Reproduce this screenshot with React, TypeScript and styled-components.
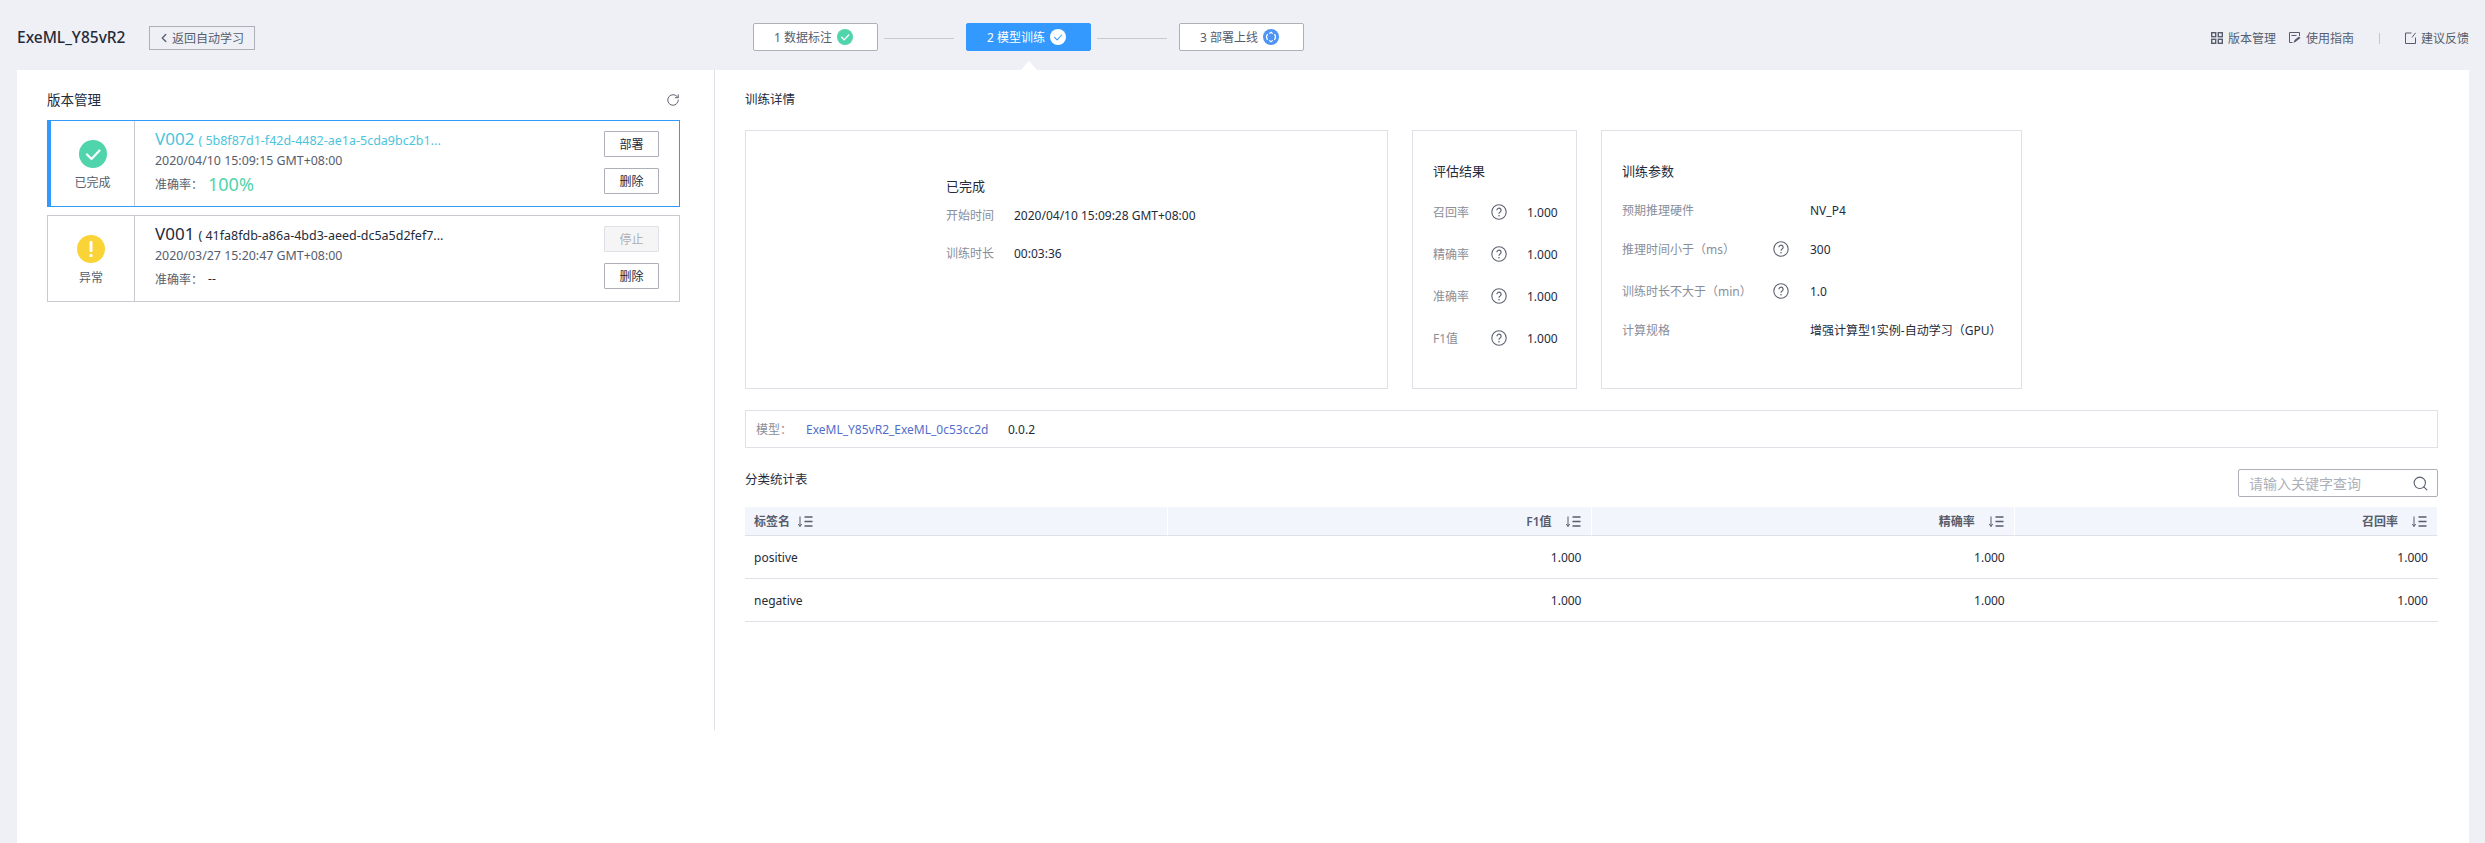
import React from "react";
import styled, { createGlobalStyle } from "styled-components";
import { ChevronLeft, RotateCw, Search } from "lucide-react";

const Global = createGlobalStyle`
  html, body { margin: 0; padding: 0; background: #eef0f5; }
  body { font-family: "Noto Sans", "Noto Sans CJK SC", sans-serif; font-size: 12px; color: #252b3a; }
  * { box-sizing: border-box; }
`;

const Page = styled.div`
  width: 2485px;
  height: 843px;
  display: flex;
  flex-direction: column;
  overflow: hidden;
`;
const Header = styled.header`
  height: 70px;
  flex: none;
  padding: 23px 16px 0 17px;
  display: flex;
  align-items: flex-start;
`;
const HeadLeft = styled.div`
  width: 736px;
  height: 28px;
  display: flex;
  align-items: center;
`;
const Title = styled.h1`
  width: 132px;
  margin: 0;
  font-size: 15.5px;
  font-weight: 500;
  line-height: 28px;
  color: #252b3a;
`;
const BackButton = styled.button`
  width: 106px;
  height: 24px;
  padding: 0 3px 0 0;
  margin-top: 2px;
  border: 1px solid #adb0b8;
  background: transparent;
  display: flex;
  align-items: center;
  justify-content: center;
  gap: 1px;
  font: inherit;
  color: #575d6c;
`;
const Steps = styled.div`
  display: flex;
  align-items: center;
`;
const Step = styled.div<{ $active?: boolean }>`
  position: relative;
  width: 125px;
  height: 28px;
  padding-right: 4px;
  display: flex;
  align-items: center;
  justify-content: center;
  gap: 5px;
  border-radius: 2px;
  border: 1px solid ${(p) => (p.$active ? "#3399ff" : "#adb0b8")};
  background: ${(p) => (p.$active ? "#3399ff" : "#fff")};
  color: ${(p) => (p.$active ? "#fff" : "#575d6c")};
  font-size: 12px;
  ${(p) =>
    p.$active &&
    `&::after {
      content: "";
      position: absolute;
      left: 50%;
      top: 37px;
      margin-left: -9px;
      border-left: 9px solid transparent;
      border-right: 9px solid transparent;
      border-bottom: 10px solid #fff;
    }`}
`;
const Connector = styled.div`
  width: 70px;
  height: 1px;
  margin: 2px 12px 0 6px;
  background: #c8cad0;
`;
const HeadRight = styled.div`
  margin-left: auto;
  height: 28px;
  margin-top: 1px;
  display: flex;
  align-items: center;
  color: #575d6c;
`;
const HeadLink = styled.span<{ $gap?: number }>`
  display: flex;
  align-items: center;
  gap: 5px;
  margin-left: ${(p) => p.$gap ?? 0}px;
`;
const Separator = styled.span`
  width: 1px;
  height: 11px;
  margin-left: 25px;
  margin-right: 25px;
  background: #a8cdf5;
`;
const Main = styled.main`
  flex: 1;
  margin: 0 16px 0 17px;
  background: #fff;
  display: flex;
  align-items: flex-start;
`;
const Side = styled.aside`
  width: 698px;
  height: 660px;
  flex: none;
  padding: 20px 34px 0 30px;
  border-right: 1px solid #dfe1e6;
`;
const SideHead = styled.div`
  height: 20px;
  display: flex;
  align-items: center;
  justify-content: space-between;
  font-size: 13.5px;
  line-height: 20px;
  margin-bottom: 10px;
  color: #252b3a;
  svg { color: #575d6c; }
`;
const VersionCard = styled.div<{ $active?: boolean }>`
  height: 87px;
  display: flex;
  margin-bottom: 8px;
  border: 1px solid ${(p) => (p.$active ? "#3399ff" : "#c8cad0")};
  ${(p) => p.$active && "border-left: 4px solid #3399ff;"}
`;
const StatusCell = styled.div<{ $active?: boolean }>`
  width: ${(p) => (p.$active ? 84 : 87)}px;
  flex: none;
  border-right: 1px solid #c8cad0;
  display: flex;
  flex-direction: column;
  align-items: center;
  padding-top: 19px;
  gap: 7px;
  color: #575d6c;
  line-height: 16px;
`;
const InfoCell = styled.div`
  flex: 1;
  padding: 6px 0 0 20px;
  min-width: 0;
`;
const VersionLine = styled.div<{ $active?: boolean }>`
  height: 24px;
  display: flex;
  align-items: baseline;
  gap: 4px;
  white-space: nowrap;
  font-size: 12.5px;
  color: ${(p) => (p.$active ? "#4cc4dc" : "#252b3a")};
`;
const VersionName = styled.span`
  font-size: 17px;
  line-height: 24px;
`;
const DateLine = styled.div`
  height: 18px;
  margin-top: 1px;
  line-height: 18px;
  font-size: 12.4px;
  color: #575d6c;
`;
const ScoreLine = styled.div`
  height: 26px;
  margin-top: 1px;
  display: flex;
  align-items: center;
  gap: 5px;
  color: #575d6c;
`;
const ScoreValue = styled.span<{ $big?: boolean }>`
  font-size: ${(p) => (p.$big ? 18 : 12)}px;
  color: ${(p) => (p.$big ? "#50d4ab" : "#252b3a")};
  line-height: 26px;
`;
const ActionCell = styled.div`
  width: 75px;
  flex: none;
  padding: 10px 0 0;
  display: flex;
  flex-direction: column;
  gap: 11px;
`;
const ActionButton = styled.button`
  width: 55px;
  height: 26px;
  padding: 0;
  border: 1px solid #adb0b8;
  border-radius: 1px;
  background: #fff;
  color: #252b3a;
  font: inherit;
  &:disabled {
    background: #f5f5f6;
    border-color: #dfe1e6;
    color: #adb0b8;
  }
`;
const Content = styled.section`
  flex: 1;
  padding: 20px 31px 0 30px;
  min-width: 0;
`;
const SectionTitle = styled.div<{ $lift?: number }>`
  height: 20px;
  font-size: 12.5px;
  line-height: 20px;
  color: #252b3a;
  margin-bottom: ${(p) => p.$lift ?? 0}px;
`;
const BoxRow = styled.div`
  display: flex;
  margin-top: 20px;
  height: 259px;
`;
const Box = styled.div<{ $w: number; $ml?: number; $pl: number }>`
  width: ${(p) => p.$w}px;
  margin-left: ${(p) => p.$ml ?? 0}px;
  border: 1px solid #dfe1e6;
  padding: 31px 0 0 ${(p) => p.$pl}px;
`;
const BoxTitle = styled.div`
  height: 18px;
  line-height: 18px;
  font-size: 13px;
  color: #252b3a;
`;
const StateBlock = styled(BoxTitle)`
  margin-top: 15px;
`;
const KvRow = styled.div<{ $top: number; $labelW: number }>`
  display: grid;
  grid-template-columns: ${(p) => p.$labelW}px 1fr;
  align-items: center;
  height: 18px;
  margin-top: ${(p) => p.$top}px;
  white-space: nowrap;
`;
const Label = styled.span`
  color: #8a8e99;
`;
const Value = styled.span`
  color: #252b3a;
`;
const MetricRow = styled.div<{ $top: number }>`
  display: grid;
  grid-template-columns: 58px 36px 1fr;
  align-items: center;
  height: 18px;
  margin-top: ${(p) => p.$top}px;
`;
const ParamRow = styled.div<{ $top: number }>`
  display: grid;
  grid-template-columns: 151px 37px 1fr;
  align-items: center;
  height: 18px;
  margin-top: ${(p) => p.$top}px;
  white-space: nowrap;
`;
const ModelBox = styled.div`
  height: 38px;
  margin-top: 21px;
  border: 1px solid #dfe1e6;
  padding-left: 10px;
  display: flex;
  align-items: center;
`;
const ModelLabel = styled(Label)`
  width: 50px;
`;
const ModelLink = styled.span`
  width: 202px;
  color: #526ecc;
`;
const TableHead = styled.div`
  height: 28px;
  margin-top: 21px;
  display: flex;
  align-items: center;
  justify-content: space-between;
`;
const SearchBox = styled.div`
  width: 200px;
  height: 28px;
  border: 1px solid #adb0b8;
  border-radius: 2px;
  display: flex;
  align-items: center;
  justify-content: space-between;
  padding: 0 8px 0 10px;
  font-size: 14px;
  color: #adb0b8;
  svg { color: #575d6c; }
`;
const Grid = styled.div`
  display: grid;
  grid-template-columns: repeat(4, 1fr);
  margin-top: 10px;
`;
const HeadCell = styled.div<{ $left?: boolean }>`
  height: 29px;
  background: #f2f5fc;
  border-bottom: 1px solid #dfe1e6;
  border-right: 1px solid #fff;
  display: flex;
  align-items: center;
  justify-content: ${(p) => (p.$left ? "flex-start" : "flex-end")};
  gap: ${(p) => (p.$left ? 7 : 13)}px;
  padding: 0 10px 0 9px;
  font-weight: 600;
  color: #575d6c;
`;
const BodyCell = styled.div<{ $left?: boolean }>`
  height: 43px;
  border-bottom: 1px solid #dfe1e6;
  display: flex;
  align-items: center;
  justify-content: ${(p) => (p.$left ? "flex-start" : "flex-end")};
  padding: 0 ${(p) => (p.$left ? 9 : 10)}px 0 9px;
  color: #252b3a;
`;

const CheckBadge = ({ size, bg, fg, sw = 2 }: { size: number; bg: string; fg: string; sw?: number }) => (
  <svg width={size} height={size} viewBox="0 0 28 28">
    <circle cx="14" cy="14" r="14" fill={bg} />
    <path d="M8 14.5l4.5 4.5L20.5 10.5" fill="none" stroke={fg} strokeWidth={sw} strokeLinecap="round" strokeLinejoin="round" />
  </svg>
);
const WarnBadge = () => (
  <svg width="28" height="28" viewBox="0 0 28 28">
    <circle cx="14" cy="14" r="14" fill="#fad337" />
    <rect x="12.5" y="6" width="3" height="11" rx="1" fill="#fff" />
    <rect x="12.5" y="19" width="3" height="3" rx="1" fill="#fff" />
  </svg>
);
const DeployBadge = () => (
  <svg width="16" height="16" viewBox="0 0 16 16">
    <circle cx="8" cy="8" r="8" fill="#4d94f5" />
    <path d="M4.6 5.2A4.6 4.6 0 0 0 4.6 10.8M11.4 5.2A4.6 4.6 0 0 1 11.4 10.8" fill="none" stroke="#fff" strokeWidth="1.3" />
    <path d="M6.2 4.6L8 3.2l1.8 1.4M6.2 11.4L8 12.8l1.8-1.4" fill="none" stroke="#fff" strokeWidth="1.2" />
  </svg>
);
const Help = () => (
  <svg width="16" height="16" viewBox="0 0 16 16">
    <circle cx="8" cy="8" r="7.2" fill="none" stroke="#5e6370" strokeWidth="1.1" />
    <path d="M5.9 6.2a2.1 2.1 0 1 1 3.2 1.8c-.7.4-1.1.9-1.1 1.7" fill="none" stroke="#5e6370" strokeWidth="1.2" />
    <circle cx="8" cy="11.8" r=".8" fill="#5e6370" />
  </svg>
);
const Sort = () => (
  <svg width="16" height="13" viewBox="0 0 16 13">
    <path d="M3 1.5v10M1.3 9l1.7 2.5L4.7 9" fill="none" stroke="#575d6c" strokeWidth="1" />
    <path d="M7.5 2h8M7.5 6.5h8M7.5 11h8" stroke="#575d6c" strokeWidth="1.5" />
  </svg>
);
const GridIcon = () => (
  <svg width="12" height="12" viewBox="0 0 12 12">
    <g fill="none" stroke="#575d6c" strokeWidth="1.4">
      <rect x=".7" y=".7" width="4" height="4" />
      <rect x="7.3" y=".7" width="4" height="4" />
      <rect x=".7" y="7.3" width="4" height="4" />
      <rect x="7.3" y="7.3" width="4" height="4" />
    </g>
  </svg>
);
const GuideIcon = () => (
  <svg width="12" height="12" viewBox="0 0 12 12">
    <path d="M3.5 10.5H.5V.5h10V4" fill="none" stroke="#575d6c" />
    <path d="M2.5 3.5h5" stroke="#575d6c" />
    <path d="M4.5 11l1-3 4.5-3.5 1.5 1.5L7 9.5z" fill="#575d6c" />
  </svg>
);
const FeedbackIcon = () => (
  <svg width="11" height="12" viewBox="0 0 11 12">
    <path d="M6.5 1H.5v10.5h10V5.5" fill="none" stroke="#575d6c" />
    <path d="M7 5.5L10.6 .8" stroke="#575d6c" />
  </svg>
);

const metrics = ["召回率", "精确率", "准确率", "F1值"];
const tableRows = ["positive", "negative"];

export default function App() {
  return (
    <Page>
      <Global />
      <Header>
        <HeadLeft>
          <Title>ExeML_Y85vR2</Title>
          <BackButton>
            <ChevronLeft size={14} strokeWidth={2.2} />
            返回自动学习
          </BackButton>
        </HeadLeft>
        <Steps>
          <Step>
            1 数据标注 <CheckBadge size={16} bg="#50d4ab" fg="#fff" sw={2.4} />
          </Step>
          <Connector />
          <Step $active>
            2 模型训练 <CheckBadge size={16} bg="#fff" fg="#3399ff" sw={1.8} />
          </Step>
          <Connector />
          <Step>
            3 部署上线 <DeployBadge />
          </Step>
        </Steps>
        <HeadRight>
          <HeadLink>
            <GridIcon />
            版本管理
          </HeadLink>
          <HeadLink $gap={13}>
            <GuideIcon />
            使用指南
          </HeadLink>
          <Separator />
          <HeadLink>
            <FeedbackIcon />
            建议反馈
          </HeadLink>
        </HeadRight>
      </Header>
      <Main>
        <Side>
          <SideHead>
            版本管理
            <RotateCw size={14} strokeWidth={1.6} />
          </SideHead>
          <VersionCard $active>
            <StatusCell $active>
              <CheckBadge size={28} bg="#50d4ab" fg="#fff" sw={2.2} />
              已完成
            </StatusCell>
            <InfoCell>
              <VersionLine $active>
                <VersionName>V002</VersionName>( 5b8f87d1-f42d-4482-ae1a-5cda9bc2b1...
              </VersionLine>
              <DateLine>2020/04/10 15:09:15 GMT+08:00</DateLine>
              <ScoreLine>
                准确率：
                <ScoreValue $big>100%</ScoreValue>
              </ScoreLine>
            </InfoCell>
            <ActionCell>
              <ActionButton>部署</ActionButton>
              <ActionButton>删除</ActionButton>
            </ActionCell>
          </VersionCard>
          <VersionCard>
            <StatusCell>
              <WarnBadge />
              异常
            </StatusCell>
            <InfoCell>
              <VersionLine>
                <VersionName>V001</VersionName>( 41fa8fdb-a86a-4bd3-aeed-dc5a5d2fef7...
              </VersionLine>
              <DateLine>2020/03/27 15:20:47 GMT+08:00</DateLine>
              <ScoreLine>
                准确率：
                <ScoreValue>--</ScoreValue>
              </ScoreLine>
            </InfoCell>
            <ActionCell>
              <ActionButton disabled>停止</ActionButton>
              <ActionButton>删除</ActionButton>
            </ActionCell>
          </VersionCard>
        </Side>
        <Content>
          <SectionTitle>训练详情</SectionTitle>
          <BoxRow>
            <Box $w={643} $pl={200}>
              <StateBlock>已完成</StateBlock>
              <KvRow $top={11} $labelW={68}>
                <Label>开始时间</Label>
                <Value>2020/04/10 15:09:28 GMT+08:00</Value>
              </KvRow>
              <KvRow $top={20} $labelW={68}>
                <Label>训练时长</Label>
                <Value>00:03:36</Value>
              </KvRow>
            </Box>
            <Box $w={165} $ml={24} $pl={20}>
              <BoxTitle>评估结果</BoxTitle>
              {metrics.map((m, i) => (
                <MetricRow key={m} $top={i === 0 ? 23 : 24}>
                  <Label>{m}</Label>
                  <Help />
                  <Value>1.000</Value>
                </MetricRow>
              ))}
            </Box>
            <Box $w={421} $ml={24} $pl={20}>
              <BoxTitle>训练参数</BoxTitle>
              <ParamRow $top={21}>
                <Label>预期推理硬件</Label>
                <span />
                <Value>NV_P4</Value>
              </ParamRow>
              <ParamRow $top={21}>
                <Label>推理时间小于（ms）</Label>
                <Help />
                <Value>300</Value>
              </ParamRow>
              <ParamRow $top={24}>
                <Label>训练时长不大于（min）</Label>
                <Help />
                <Value>1.0</Value>
              </ParamRow>
              <ParamRow $top={21}>
                <Label>计算规格</Label>
                <span />
                <Value>增强计算型1实例-自动学习（GPU）</Value>
              </ParamRow>
            </Box>
          </BoxRow>
          <ModelBox>
            <ModelLabel>模型：</ModelLabel>
            <ModelLink>ExeML_Y85vR2_ExeML_0c53cc2d</ModelLink>
            <Value>0.0.2</Value>
          </ModelBox>
          <TableHead>
            <SectionTitle $lift={6}>分类统计表</SectionTitle>
            <SearchBox>
              请输入关键字查询
              <Search size={17} strokeWidth={1.5} />
            </SearchBox>
          </TableHead>
          <Grid>
            <HeadCell $left>
              标签名 <Sort />
            </HeadCell>
            <HeadCell>
              F1值 <Sort />
            </HeadCell>
            <HeadCell>
              精确率 <Sort />
            </HeadCell>
            <HeadCell>
              召回率 <Sort />
            </HeadCell>
            {tableRows.map((r) => (
              <React.Fragment key={r}>
                <BodyCell $left>{r}</BodyCell>
                <BodyCell>1.000</BodyCell>
                <BodyCell>1.000</BodyCell>
                <BodyCell>1.000</BodyCell>
              </React.Fragment>
            ))}
          </Grid>
        </Content>
      </Main>
    </Page>
  );
}
